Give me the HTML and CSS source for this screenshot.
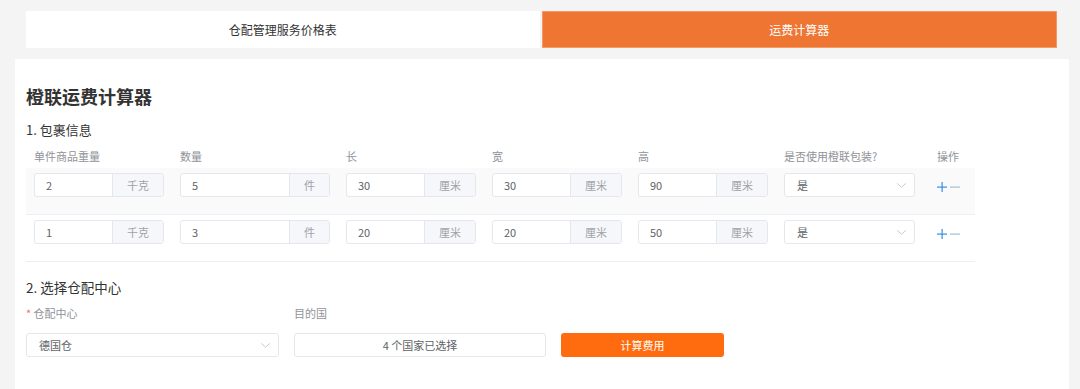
FILE: index.html
```html
<!DOCTYPE html>
<html lang="zh-CN">

<head>
    <meta charset="UTF-8">
    <meta name="viewport" content="width=device-width, initial-scale=1.0">
    <title>橙联运费计算器</title>
    <link rel="stylesheet" href="styles.css">
</head>

<body>
    <div class="tabs">
        <div class="tab">仓配管理服务价格表</div>
        <div class="tab active">运费计算器</div>
    </div>

    <div class="card">
        <h2 class="title">橙联运费计算器</h2>

        <div class="section-title">1. 包裹信息</div>
        <div class="parcel-table">
            <div class="row head">
                <div class="cell">单件商品重量</div>
                <div class="cell">数量</div>
                <div class="cell">长</div>
                <div class="cell">宽</div>
                <div class="cell">高</div>
                <div class="cell">是否使用橙联包装?</div>
                <div class="cell">操作</div>
            </div>

            <div class="row item hover">
                <div class="cell"><div class="input-group"><span class="value">2</span><span class="append">千克</span></div></div>
                <div class="cell"><div class="input-group"><span class="value">5</span><span class="append">件</span></div></div>
                <div class="cell"><div class="input-group"><span class="value">30</span><span class="append">厘米</span></div></div>
                <div class="cell"><div class="input-group"><span class="value">30</span><span class="append">厘米</span></div></div>
                <div class="cell"><div class="input-group"><span class="value">90</span><span class="append">厘米</span></div></div>
                <div class="cell">
                    <div class="select small"><span>是</span>
                        <svg class="arrow" viewBox="0 0 12 8"><path d="M1 1.5 L6 6 L11 1.5" /></svg>
                    </div>
                </div>
                <div class="cell ops">
                    <svg class="op plus" viewBox="0 0 10 10"><rect x="4.5" y="0" width="1.2" height="10" /><rect x="0" y="4.5" width="10" height="1.2" /></svg>
                    <svg class="op minus" viewBox="0 0 10 10"><rect x="0" y="4.5" width="10" height="1.2" /></svg>
                </div>
            </div>

            <div class="row item">
                <div class="cell"><div class="input-group"><span class="value">1</span><span class="append">千克</span></div></div>
                <div class="cell"><div class="input-group"><span class="value">3</span><span class="append">件</span></div></div>
                <div class="cell"><div class="input-group"><span class="value">20</span><span class="append">厘米</span></div></div>
                <div class="cell"><div class="input-group"><span class="value">20</span><span class="append">厘米</span></div></div>
                <div class="cell"><div class="input-group"><span class="value">50</span><span class="append">厘米</span></div></div>
                <div class="cell">
                    <div class="select small"><span>是</span>
                        <svg class="arrow" viewBox="0 0 12 8"><path d="M1 1.5 L6 6 L11 1.5" /></svg>
                    </div>
                </div>
                <div class="cell ops">
                    <svg class="op plus" viewBox="0 0 10 10"><rect x="4.5" y="0" width="1.2" height="10" /><rect x="0" y="4.5" width="10" height="1.2" /></svg>
                    <svg class="op minus" viewBox="0 0 10 10"><rect x="0" y="4.5" width="10" height="1.2" /></svg>
                </div>
            </div>
        </div>

        <div class="section-title second">2. 选择仓配中心</div>
        <div class="center-form">
            <div class="field">
                <label><span class="required">*</span> 仓配中心</label>
                <div class="select"><span>德国仓</span>
                    <svg class="arrow" viewBox="0 0 12 8"><path d="M1 1.5 L6 6 L11 1.5" /></svg>
                </div>
            </div>
            <div class="field">
                <label>目的国</label>
                <div class="country-box">4 个国家已选择</div>
            </div>
            <div class="field">
                <button class="calc-btn">计算费用</button>
            </div>
        </div>
    </div>
</body>

</html>
```

FILE: styles.css
```css
* {
    box-sizing: border-box;
    margin: 0;
    padding: 0;
    font-family: "Noto Sans CJK SC", "Liberation Sans", sans-serif;
}

body {
    background: #f4f4f4;
    height: 389px;
    overflow: hidden;
    color: #333;
}

.tabs {
    display: flex;
    gap: 2px;
    padding: 11px 23px 0 26px;
}

.tab {
    flex: 1;
    height: 37px;
    line-height: 37px;
    text-align: center;
    font-size: 12px;
    background: white;
    color: #333;
}

.tab.active {
    background: #ef7533;
    color: white;
    border: 1px solid #f39a66;
    line-height: 35px;
}

.card {
    background: white;
    margin: 11px 11px 0 15px;
    padding: 25px 11px 0 11px;
    height: 330px;
}

.title {
    font-size: 18px;
    line-height: 24px;
    font-weight: 700;
    color: #333;
}

.section-title {
    font-size: 13px;
    line-height: 18px;
    margin-top: 13px;
    color: #333;
}

.section-title.second {
    font-size: 13.5px;
    margin-top: 16px;
}

.parcel-table {
    width: 949px;
    margin-top: 5px;
    border-bottom: 1px solid #ebeef5;
}

.row {
    display: grid;
    grid-template-columns: 146px 166px 146px 146px 146px 153px 46px;
}

.row.head {
    height: 24px;
    align-items: center;
    font-size: 11px;
    color: #909399;
}

.row.head .cell {
    padding: 0 8px;
}

.row.item .cell {
    padding: 5px 8px 17px;
}

.row.item + .row.item {
    border-top: 1px solid #ebeef5;
}

.row.hover {
    background: #fafafa;
}

.input-group {
    display: flex;
    height: 24px;
    border: 1px solid #e4e7ed;
    border-radius: 3px;
    font-size: 11px;
    overflow: hidden;
    background: white;
}

.input-group .value {
    flex: 1;
    padding-left: 11px;
    line-height: 22px;
    color: #606266;
}

.input-group .append {
    padding: 0 14px;
    line-height: 22px;
    background: #f5f7fa;
    border-left: 1px solid #e4e7ed;
    color: #a0a3a8;
}

.select {
    display: flex;
    align-items: center;
    justify-content: space-between;
    height: 24px;
    border: 1px solid #e4e7ed;
    border-radius: 3px;
    padding: 0 7px 0 12px;
    font-size: 11px;
    color: #606266;
    background: white;
}

.select.small {
    width: 131px;
}

.arrow {
    width: 11px;
    height: 7px;
    fill: none;
    stroke: #c0c4cc;
    stroke-width: 1;
}

.ops {
    display: flex;
    gap: 3px;
}

.row.item .cell.ops {
    padding: 14px 0 0 8px;
}

.op {
    width: 10px;
    height: 10px;
    flex-shrink: 0;
}

.op.plus {
    fill: #3a8ee6;
}

.op.minus {
    fill: #a9bdd2;
}

.center-form {
    display: grid;
    grid-template-columns: 253px 252px 163px;
    gap: 15px;
    margin-top: 9px;
}

.field label {
    display: block;
    height: 16px;
    line-height: 16px;
    font-size: 11px;
    color: #909399;
    margin-bottom: 12px;
}

.required {
    color: #f56c6c;
}

.country-box {
    height: 24px;
    line-height: 22px;
    border: 1px solid #e4e7ed;
    border-radius: 3px;
    text-align: center;
    font-size: 11px;
    color: #606266;
}

.calc-btn {
    width: 100%;
    height: 24px;
    margin-top: 28px;
    border: none;
    border-radius: 3px;
    background: #ff6c0f;
    color: white;
    font-size: 11px;
    cursor: pointer;
}
```
